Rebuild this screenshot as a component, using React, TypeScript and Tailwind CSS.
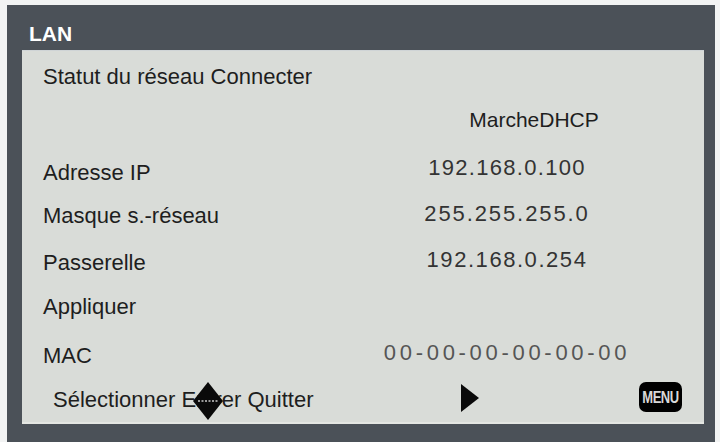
import React from "react";

const font = { fontFamily: '"Liberation Sans", Arial, sans-serif' };

export default function App() {
  return (
    <div className="w-[720px] h-[442px] bg-[#f2f3f3] pt-[5px] pl-[7px] overflow-hidden" style={font}>
      <div className="w-[708px] h-[437px] bg-[#4b5158] flex flex-col">
        <div className="h-[45px] pt-[18px] pl-[22px] text-[21px] leading-[21px] font-bold text-white">LAN</div>
        <div className="ml-[15px] w-[682px] h-[374px] bg-[#d9dcd8] border-t border-[#cfd4d6] border-b-2 border-b-[#e4e6e2] pt-[4px] pl-[21px] flex flex-col text-[22px] text-[#1e1e1e]">
          <div className="h-[43px] leading-[44px]">Statut du réseau Connecter</div>
          <div className="h-[54px] flex items-start">
            <div className="w-[267px]" />
            <div className="flex-1 text-center pl-[54px] text-[21px] leading-[44px] text-[#1e1e1e]">MarcheDHCP</div>
          </div>
          <div className="h-[43px] flex items-start">
            <div className="w-[267px] leading-[44px]">Adresse IP</div>
            <div className="flex-1 text-center leading-[44px] -mt-[5px] tracking-[1.3px] text-[#333]">192.168.0.100</div>
          </div>
          <div className="h-[48px] flex items-start">
            <div className="w-[267px] leading-[44px]">Masque s.-réseau</div>
            <div className="flex-1 text-center leading-[44px] -mt-[2px] tracking-[1.9px] text-[#333]">255.255.255.0</div>
          </div>
          <div className="h-[44px] flex items-start">
            <div className="w-[267px] leading-[44px]">Passerelle</div>
            <div className="flex-1 text-center leading-[44px] -mt-[3px] tracking-[1.55px] text-[#333]">192.168.0.254</div>
          </div>
          <div className="h-[49px] leading-[44px]">Appliquer</div>
          <div className="h-[45px] flex items-start">
            <div className="w-[267px] leading-[44px]">MAC</div>
            <div className="flex-1 text-center leading-[44px] -mt-[3px] tracking-[3.7px] text-[#555]">00-00-00-00-00-00</div>
          </div>
          <div className="flex-1 flex items-start">
            <div className="relative w-[418px] pl-[10px] leading-[44px] whitespace-nowrap">
              Sélectionner Entrer Quitter
              <svg className="absolute left-[150px] top-[4px]" width="30" height="38" viewBox="0 0 30 38">
                <polygon points="15,0 30,19 15,38 0,19" fill="#0a0a0a" />
                <line x1="5" y1="19" x2="25" y2="19" stroke="#9a9a9a" strokeWidth="2" strokeDasharray="2 1.5" />
              </svg>
            </div>
            <svg className="mt-[6px]" width="18" height="28" viewBox="0 0 18 28">
              <polygon points="0,0 18,14 0,28" fill="#0a0a0a" />
            </svg>
            <div className="ml-auto mr-[22px] mt-[4px] w-[43px] h-[30px] rounded-[7px] bg-black flex items-center justify-center">
              <span className="text-[13px] font-bold leading-none text-[#d8d8d8] scale-y-[1.3] tracking-[-0.5px]">MENU</span>
            </div>
          </div>
        </div>
      </div>
    </div>
  );
}
